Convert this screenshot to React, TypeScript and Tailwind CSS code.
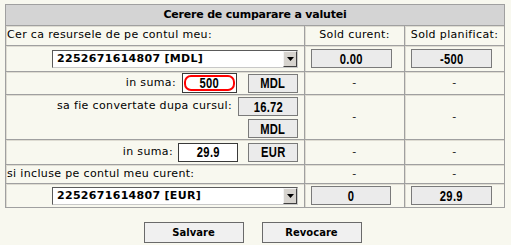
import React from 'react';

const cell = 'border-r border-b border-[#a0a0a0] shadow-[inset_1px_1px_0_#dedcd2] bg-[#f8f8ef]';
const boxFont = 'font-["Liberation_Sans_Narrow","Arial_Narrow","Liberation_Sans",sans-serif] font-bold text-[14px] text-black';

// condensed bold value text, like the narrow face in the reference
const Val = ({ children }: { children: React.ReactNode }) => (
  <span className={`inline-block scale-x-[0.8] leading-none ${boxFont}`}>{children}</span>
);

const ReadBox = ({ value, w = 'w-[81px]' }: { value: string; w?: string }) => (
  <div className={`${w} h-[19px] bg-[#ebebeb] border border-[#7a7a7a] flex items-center justify-center`}>
    <Val>{value}</Val>
  </div>
);

const CurBox = ({ value, w = 'w-[50px]' }: { value: string; w?: string }) => (
  <div className={`${w} h-[19px] bg-[#ebebeb] border border-[#7a7a7a] flex items-center justify-center`}>
    <Val>{value}</Val>
  </div>
);

const Select = ({ label }: { label: string }) => (
  <div className="w-[246px] h-[18px] bg-white border border-t-[#5a5a5a] border-l-[#5a5a5a] border-r-[#c8c8c8] border-b-[#c8c8c8] flex items-center">
    <span className="flex-1 pl-[4px] font-bold text-[11px] tracking-[0.3px] leading-none text-black">{label}</span>
    <div className="w-[14px] h-[16px] bg-[#d6d3ce] border border-t-[#f4f4f4] border-l-[#f4f4f4] border-r-[#404040] border-b-[#404040] flex items-center justify-center">
      <svg width="7" height="4" viewBox="0 0 7 4">
        <path d="M0 0h7L3.5 4z" fill="#000" />
      </svg>
    </div>
  </div>
);

const Dash = () => <span className="text-[11px] text-[#222]">-</span>;

export default function App() {
  return (
    <div className='min-h-[245px] bg-[#f8f8ef] font-["DejaVu_Sans",Verdana,sans-serif] text-[11px] tracking-[0.35px] text-black pt-[4px]'>
      <div className="ml-[5px] w-[500px] border-t border-l border-[#a0a0a0] grid grid-cols-[299px_100px_100px]">
        {/* header */}
        <div className="col-span-3 h-[21px] bg-[#d4d4d4] border-r border-b border-[#a0a0a0] flex items-center justify-center font-bold text-[11px] tracking-[-0.2px]">
          Cerere de cumparare a valutei
        </div>

        {/* row 1 */}
        <div className={`${cell} h-[20px] flex items-center pl-[1px]`}>Cer ca resursele de pe contul meu:</div>
        <div className={`${cell} h-[20px] flex items-center justify-center`}>Sold curent:</div>
        <div className={`${cell} h-[20px] flex items-center justify-center`}>Sold planificat:</div>

        {/* row 2 */}
        <div className={`${cell} h-[26px] flex items-center justify-end pr-[6px]`}>
          <Select label="2252671614807 [MDL]" />
        </div>
        <div className={`${cell} h-[26px] flex items-center pl-[6px]`}>
          <ReadBox value="0.00" />
        </div>
        <div className={`${cell} h-[26px] flex items-center pl-[6px]`}>
          <ReadBox value="-500" />
        </div>

        {/* row 3 */}
        <div className={`${cell} h-[23px] flex items-center justify-end pr-[6px]`}>
          <span className="mr-[6px]">in suma:</span>
          <div className="w-[55px] h-[20px] bg-white border border-[#3a3a3a] p-px">
            <div className="w-full h-full border-2 border-[#ff0000] rounded-[7px] flex items-center justify-center">
              <Val>500</Val>
            </div>
          </div>
          <div className="ml-[11px]">
            <CurBox value="MDL" />
          </div>
        </div>
        <div className={`${cell} h-[23px] flex items-center justify-center`}><Dash /></div>
        <div className={`${cell} h-[23px] flex items-center justify-center`}><Dash /></div>

        {/* row 4 */}
        <div className={`${cell} h-[45px] flex flex-col items-end pr-[6px] pt-[2px] gap-[3px]`}>
          <div className="flex items-center">
            <span className="mr-[6px]">sa fie convertate dupa cursul:</span>
            <CurBox value="16.72" w="w-[60px]" />
          </div>
          <CurBox value="MDL" />
        </div>
        <div className={`${cell} h-[45px] flex items-center justify-center`}><Dash /></div>
        <div className={`${cell} h-[45px] flex items-center justify-center`}><Dash /></div>

        {/* row 5 */}
        <div className={`${cell} h-[25px] flex items-center justify-end pr-[6px]`}>
          <span className="mr-[5px]">in suma:</span>
          <div className="w-[60px] h-[19px] bg-white border border-[#3a3a3a] flex items-center justify-center">
            <Val>29.9</Val>
          </div>
          <div className="ml-[10px]">
            <CurBox value="EUR" />
          </div>
        </div>
        <div className={`${cell} h-[25px] flex items-center justify-center`}><Dash /></div>
        <div className={`${cell} h-[25px] flex items-center justify-center`}><Dash /></div>

        {/* row 6 */}
        <div className={`${cell} h-[19px] flex items-center pl-[1px]`}>si incluse pe contul meu curent:</div>
        <div className={`${cell} h-[19px] flex items-center justify-center`}><Dash /></div>
        <div className={`${cell} h-[19px] flex items-center justify-center`}><Dash /></div>

        {/* row 7 */}
        <div className={`${cell} h-[24px] flex items-center justify-end pr-[6px]`}>
          <Select label="2252671614807 [EUR]" />
        </div>
        <div className={`${cell} h-[24px] flex items-center pl-[6px]`}>
          <ReadBox value="0" w="w-[80px]" />
        </div>
        <div className={`${cell} h-[24px] flex items-center pl-[6px]`}>
          <ReadBox value="29.9" />
        </div>
      </div>

      <div className="flex justify-center gap-[18px] mt-[14px] pr-[6px]">
        <button className="w-[100px] h-[21px] bg-[#f0f0f0] border border-[#6a6a6a] font-bold text-[10px] tracking-normal text-black">Salvare</button>
        <button className="w-[100px] h-[21px] bg-[#f0f0f0] border border-[#6a6a6a] font-bold text-[10px] tracking-normal text-black">Revocare</button>
      </div>
    </div>
  );
}
